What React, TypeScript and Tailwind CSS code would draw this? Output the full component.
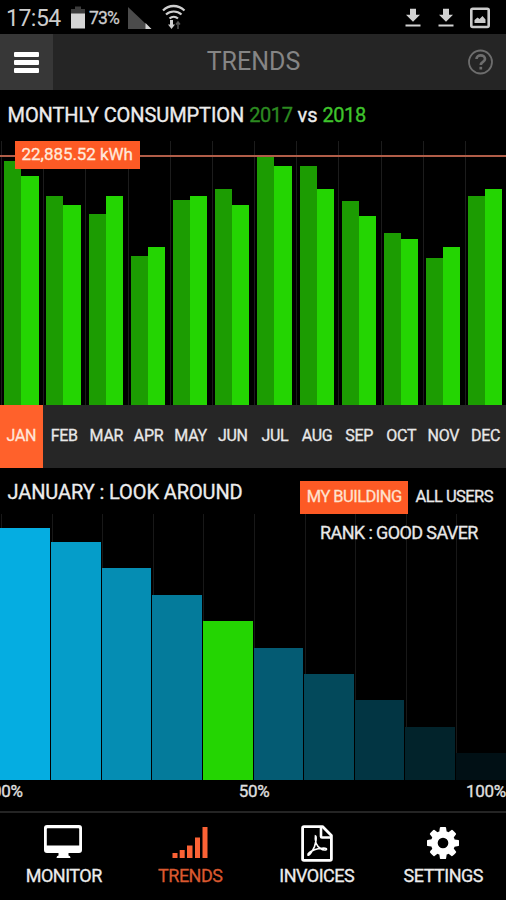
import type { ReactNode } from "react";

type MonthData = {
  label: string;
  /** Bar heights in px, previous year then current year. */
  prev: number;
  curr: number;
};

const MONTHS: MonthData[] = [
  { label: "JAN", prev: 243.5, curr: 229 },
  { label: "FEB", prev: 208.5, curr: 200 },
  { label: "MAR", prev: 190.5, curr: 208.5 },
  { label: "APR", prev: 149, curr: 157.5 },
  { label: "MAY", prev: 205, curr: 208.5 },
  { label: "JUN", prev: 215.7, curr: 200 },
  { label: "JUL", prev: 248, curr: 239 },
  { label: "AUG", prev: 239, curr: 216 },
  { label: "SEP", prev: 204, curr: 189 },
  { label: "OCT", prev: 171.5, curr: 166 },
  { label: "NOV", prev: 146.5, curr: 157.5 },
  { label: "DEC", prev: 208.5, curr: 216 },
];

const RANKS = [
  { height: 251.5, color: "bg-[#05ade1]" },
  { height: 237.5, color: "bg-[#059dc9]" },
  { height: 211.2, color: "bg-[#058db3]" },
  { height: 185, color: "bg-[#047b9b]" },
  { height: 158.5, color: "bg-[#24d502]" },
  { height: 132, color: "bg-[#045b73]" },
  { height: 105.5, color: "bg-[#03495b]" },
  { height: 79.2, color: "bg-[#023543]" },
  { height: 53, color: "bg-[#02232b]" },
  { height: 26.5, color: "bg-[#011015]" },
];

function DownloadIcon() {
  return (
    <svg className="mt-[2px]" width="16" height="20" viewBox="0 0 16 20" fill="#d2d2d2">
      <path d="M5 0.8h6v6h4L8 13.7 1 6.8h4z" />
      <path d="M0.5 16.500h15v2H0.5z" />
    </svg>
  );
}

function StatusBar() {
  return (
    <div className="flex h-[34px] items-center pl-[6px] pr-4 text-[#cdcdcd]">
      <span className="mt-[2px] w-[63px] text-[23px] leading-none tracking-[-0.5px]">17:54</span>
      <svg className="mt-[2px] ml-[1px]" width="16" height="24" viewBox="0 0 16 24">
        <path d="M5 0.500h6V3h4v6H1V3h4z" fill="#3c3c3c" />
        <path d="M1 7.500h14v15H1z" fill="#d5d5d5" />
      </svg>
      <span className="mt-[3px] ml-[3px] w-[32px] text-[17.500px] leading-none tracking-[-0.8px] [-webkit-text-stroke:0.3px]">73%</span>
      <svg className="mt-[2px] ml-[7px]" width="24" height="24" viewBox="0 0 24 24">
        <path d="M0 1v22h19v-4z" fill="#4b4b4b" />
        <path d="M17.500 17l6 6h-6z" fill="#d5d5d5" />
      </svg>
      <svg className="ml-[9px]" width="26" height="28" viewBox="0 0 26 28" fill="none" stroke="#cfcfcf">
        <path d="M2 7.500C8 1.500 17 1.500 23.500 7.500" strokeWidth="2.300" />
        <path d="M5 11.500c4.500-4 11-4 15.500 0" strokeWidth="2.200" />
        <path d="M8.500 15.500c2.500-2.200 6-2.200 8.500 0" strokeWidth="2.200" />
        <path d="M10.500 17v5" strokeWidth="3" />
        <path d="M7 21.500h7l-3.500 4.500z" fill="#cfcfcf" stroke="none" />
        <path d="M17 26v-6m-2 1.500l2-2.500 2 2.500" stroke="#555" strokeWidth="1.500" />
      </svg>
      <div className="ml-auto flex items-center">
        <DownloadIcon />
        <span className="w-[17.500px]" />
        <DownloadIcon />
        <svg className="mt-[2px] ml-4" width="20" height="22" viewBox="0 0 20 22">
          <rect x="1.300" y="1.800" width="17.400" height="18.200" rx="1.500" fill="none" stroke="#cbcbcb" strokeWidth="2.600" />
          <path d="M4.500 16v-3l3-2.500 2 1.500 3-3 3 3.500V16z" fill="#cbcbcb" />
        </svg>
      </div>
    </div>
  );
}

function Header() {
  return (
    <header className="flex h-14 items-stretch bg-[#252525]">
      <button className="flex w-[53px] flex-col items-center justify-center gap-[3px] bg-[#373737]">
        <span className="h-[5px] w-[25px] rounded-[1px] bg-white" />
        <span className="h-[5px] w-[25px] rounded-[1px] bg-white" />
        <span className="h-[5px] w-[25px] rounded-[1px] bg-white" />
      </button>
      <h1 className="flex flex-1 items-center justify-center pb-px pl-px text-[25px] text-[#858585]">TRENDS</h1>
      <div className="flex w-[53px] items-center justify-center">
        <svg width="26" height="26" viewBox="0 0 26 26" fill="none" stroke="#6d6d6d">
          <circle cx="13.500" cy="13" r="11.500" strokeWidth="1.800" />
          <path d="M9.500 10c0-5 8.500-4.800 8.500 0 0 3-4.200 2.600-4.200 6" strokeWidth="2.700" />
          <path d="M13.800 17.800v2.700" strokeWidth="2.700" />
        </svg>
      </div>
    </header>
  );
}

function MonthlyChart() {
  return (
    <div className="relative flex h-[263.500px]">
      {MONTHS.map((m) => (
        <div key={m.label} className="flex flex-1 items-end">
          <span className="mr-[2.300px] ml-[1px] h-full w-px shrink-0 bg-[#1c1c1c]" />
          <span className="w-[17px] shrink-0 bg-[#1c9c02]" style={{ height: m.prev }} />
          <span className="w-[17.300px] shrink-0 bg-[#24d502]" style={{ height: m.curr }} />
        </div>
      ))}
      <div className="absolute top-[14px] left-0 h-[2px] w-full bg-[#b05d48]" />
      <div className="absolute top-0 left-[14.500px] flex h-7 w-[125.500px] items-center justify-center bg-[#fd5a25] text-[17px] tracking-[-0.05px] text-[#ffe9dc] [-webkit-text-stroke:0.3px]">
        22,885.52 kWh
      </div>
    </div>
  );
}

function MonthTabs() {
  return (
    <div className="flex h-[63.500px] bg-[#262626] text-[16px] tracking-[-0.3px] [-webkit-text-stroke:0.3px]">
      {MONTHS.map((m, i) => (
        <div
          key={m.label}
          className={
            i === 0
              ? "flex w-[42.700px] items-center justify-center bg-[#ff612b] text-[#ffe6da]"
              : "flex flex-1 items-center justify-center pl-px text-[#e8e8e8]"
          }
        >
          {m.label}
        </div>
      ))}
    </div>
  );
}

function RankChart() {
  return (
    <div className="relative flex h-[266px]">
      {RANKS.map((r, i) => (
        <div key={r.height} className="flex flex-1 items-end">
          <span className="ml-px h-full w-px shrink-0 bg-[#181818]" />
          <span
            className={`shrink-0 ${i === 0 ? "-ml-[2px] w-[50px]" : "-ml-[1.300px] w-[49.500px]"} ${r.color}`}
            style={{ height: r.height }}
          />
        </div>
      ))}
      <div className="absolute top-[9px] left-[320px] text-[18px] leading-5 tracking-[-0.6px] whitespace-nowrap text-[#e8e8e8] [-webkit-text-stroke:0.3px]">
        RANK : GOOD SAVER
      </div>
    </div>
  );
}

function NavItem({ label, active = false, children }: { label: string; active?: boolean; children: ReactNode }) {
  return (
    <div className={active ? "flex flex-1 flex-col items-center text-[#d9582f]" : "flex flex-1 flex-col items-center text-[#ececec]"}>
      <div className="flex h-[51px] items-end justify-center">{children}</div>
      <span className="mt-[2px] pl-px text-[18px] leading-5 tracking-[-0.5px] [-webkit-text-stroke:0.3px]">{label}</span>
    </div>
  );
}

function BottomNav() {
  return (
    <nav className="flex h-[89px] border-t-2 border-[#242424]">
      <NavItem label="MONITOR">
        <svg className="mb-[5px]" width="40" height="34" viewBox="0 0 40 34" fill="white">
          <path
            fillRule="evenodd"
            d="M4 0h32q3 0 3 3v22q0 3-3 3H25.500v2.500q2 .3 2 2.500h-14q0-2.200 2-2.500V28H4q-3 0-3-3V3q0-3 3-3zM4.500 3.200q-.7 0-.7.7v16.600h32.400V3.900q0-.7-.7-.7z"
          />
        </svg>
      </NavItem>
      <NavItem label="TRENDS" active>
        <svg className="mb-[5px] ml-[2px]" width="37" height="33" viewBox="0 0 37 33" fill="#fb6235">
          <path d="M0.500 27h5v5h-5zM7.700 24h5v8h-5zM15 19.500h5.500V32H15zM23 11.500h5V32h-5zM30.500 1h5v31h-5z" />
        </svg>
      </NavItem>
      <NavItem label="INVOICES">
        <svg className="mb-[2px] ml-px" width="32" height="37" viewBox="0 0 32 37" fill="none" stroke="white">
          <path d="M3 1.600h18.500l8.900 9V34q0 1.400-1.400 1.400H3q-1.400 0-1.400-1.400V3Q1.600 1.600 3 1.600z" strokeWidth="2.800" strokeLinejoin="round" />
          <path d="M20 2v9.500q0 1 1 1h9" strokeWidth="2.600" />
          <path d="M14.500 11c-.7 4 .5 9.500 5 12.500 3 2 6 1.800 6 .5 0-1.500-8-.7-12 .8-4 1.500-7 4-6.500 5.200.8 1.200 4.500-3.500 6.500-8.500 1.400-4 2.300-10 1-10.500z" strokeWidth="1.700" />
        </svg>
      </NavItem>
      <NavItem label="SETTINGS">
        <svg className="mb-[5px] ml-px" width="32" height="32" viewBox="0 0 1536 1536" fill="white">
          <path d="M1024 768q0-106-75-181t-181-75-181 75-75 181 75 181 181 75 181-75 75-181zm512-109v222q0 12-8 23t-20 13l-185 28q-19 54-39 91 35 50 107 138 10 12 10 25t-9 23q-27 37-99 108t-94 71q-12 0-26-9l-138-108q-44 23-91 38-16 136-29 186-7 28-36 28H657q-14 0-24.500-8.500T621 1506l-28-184q-49-16-90-37l-141 107q-10 9-25 9-14 0-25-11-126-114-165-168-7-10-7-23 0-12 8-23 15-21 51-66.500t54-70.500q-27-50-41-99L29 913q-13-2-21-12.500T0 877V655q0-12 8-23t19-13l186-28q14-46 39-92-40-57-107-138-10-12-10-24 0-10 9-23 26-36 98.500-107.500T337 135q13 0 26 10l138 107q44-23 91-38 16-136 29-186 7-28 36-28h222q14 0 24.500 8.500T915 30l28 184q49 16 90 37l142-107q9-9 24-9 13 0 25 10 129 119 165 170 7 8 7 22 0 12-8 23-15 21-51 66.500t-54 70.500q26 50 41 98l183 28q13 2 21 12.500t8 23.500z" />
        </svg>
      </NavItem>
    </nav>
  );
}

export default function App() {
  return (
    <div className="flex h-[900px] w-[506px] flex-col overflow-hidden bg-black font-['Roboto',sans-serif]">
      <StatusBar />
      <Header />
      <h2 className="flex h-[51px] items-center gap-[5px] pb-px pl-[7.500px] text-[20px] tracking-[-0.08px] text-[#ececec] [-webkit-text-stroke:0.35px]">
        <span>MONTHLY CONSUMPTION</span>
        <span className="tracking-[-0.4px] text-[#2c8a20]">2017</span>
        <span>vs</span>
        <span className="tracking-[-0.4px] text-[#3fc42c]">2018</span>
      </h2>
      <MonthlyChart />
      <MonthTabs />
      <div className="flex h-[45.500px] items-start pl-[7.500px]">
        <h2 className="pt-[12px] text-[20px] leading-6 tracking-[-0.1px] whitespace-nowrap text-[#ececec] [-webkit-text-stroke:0.3px]">
          JANUARY : LOOK AROUND
        </h2>
        <div className="mt-[12.500px] mr-[13px] ml-auto flex h-[33px] items-center text-[16.500px] tracking-[-0.55px] whitespace-nowrap [-webkit-text-stroke:0.3px]">
          <span className="flex h-full w-[108.500px] items-center justify-center bg-[#fd5a25] text-[#ffe2cf]">MY BUILDING</span>
          <span className="ml-[7px] text-[#e8e8e8]">ALL USERS</span>
        </div>
      </div>
      <RankChart />
      <div className="flex h-[31.500px] items-start justify-between pt-px text-[17px] leading-5 tracking-[-0.3px] text-[#e0e0e0] [-webkit-text-stroke:0.3px]">
        <span className="-ml-[8px] w-[50px]">00%</span>
        <span>50%</span>
        <span className="w-[40px]">100%</span>
      </div>
      <BottomNav />
    </div>
  );
}
